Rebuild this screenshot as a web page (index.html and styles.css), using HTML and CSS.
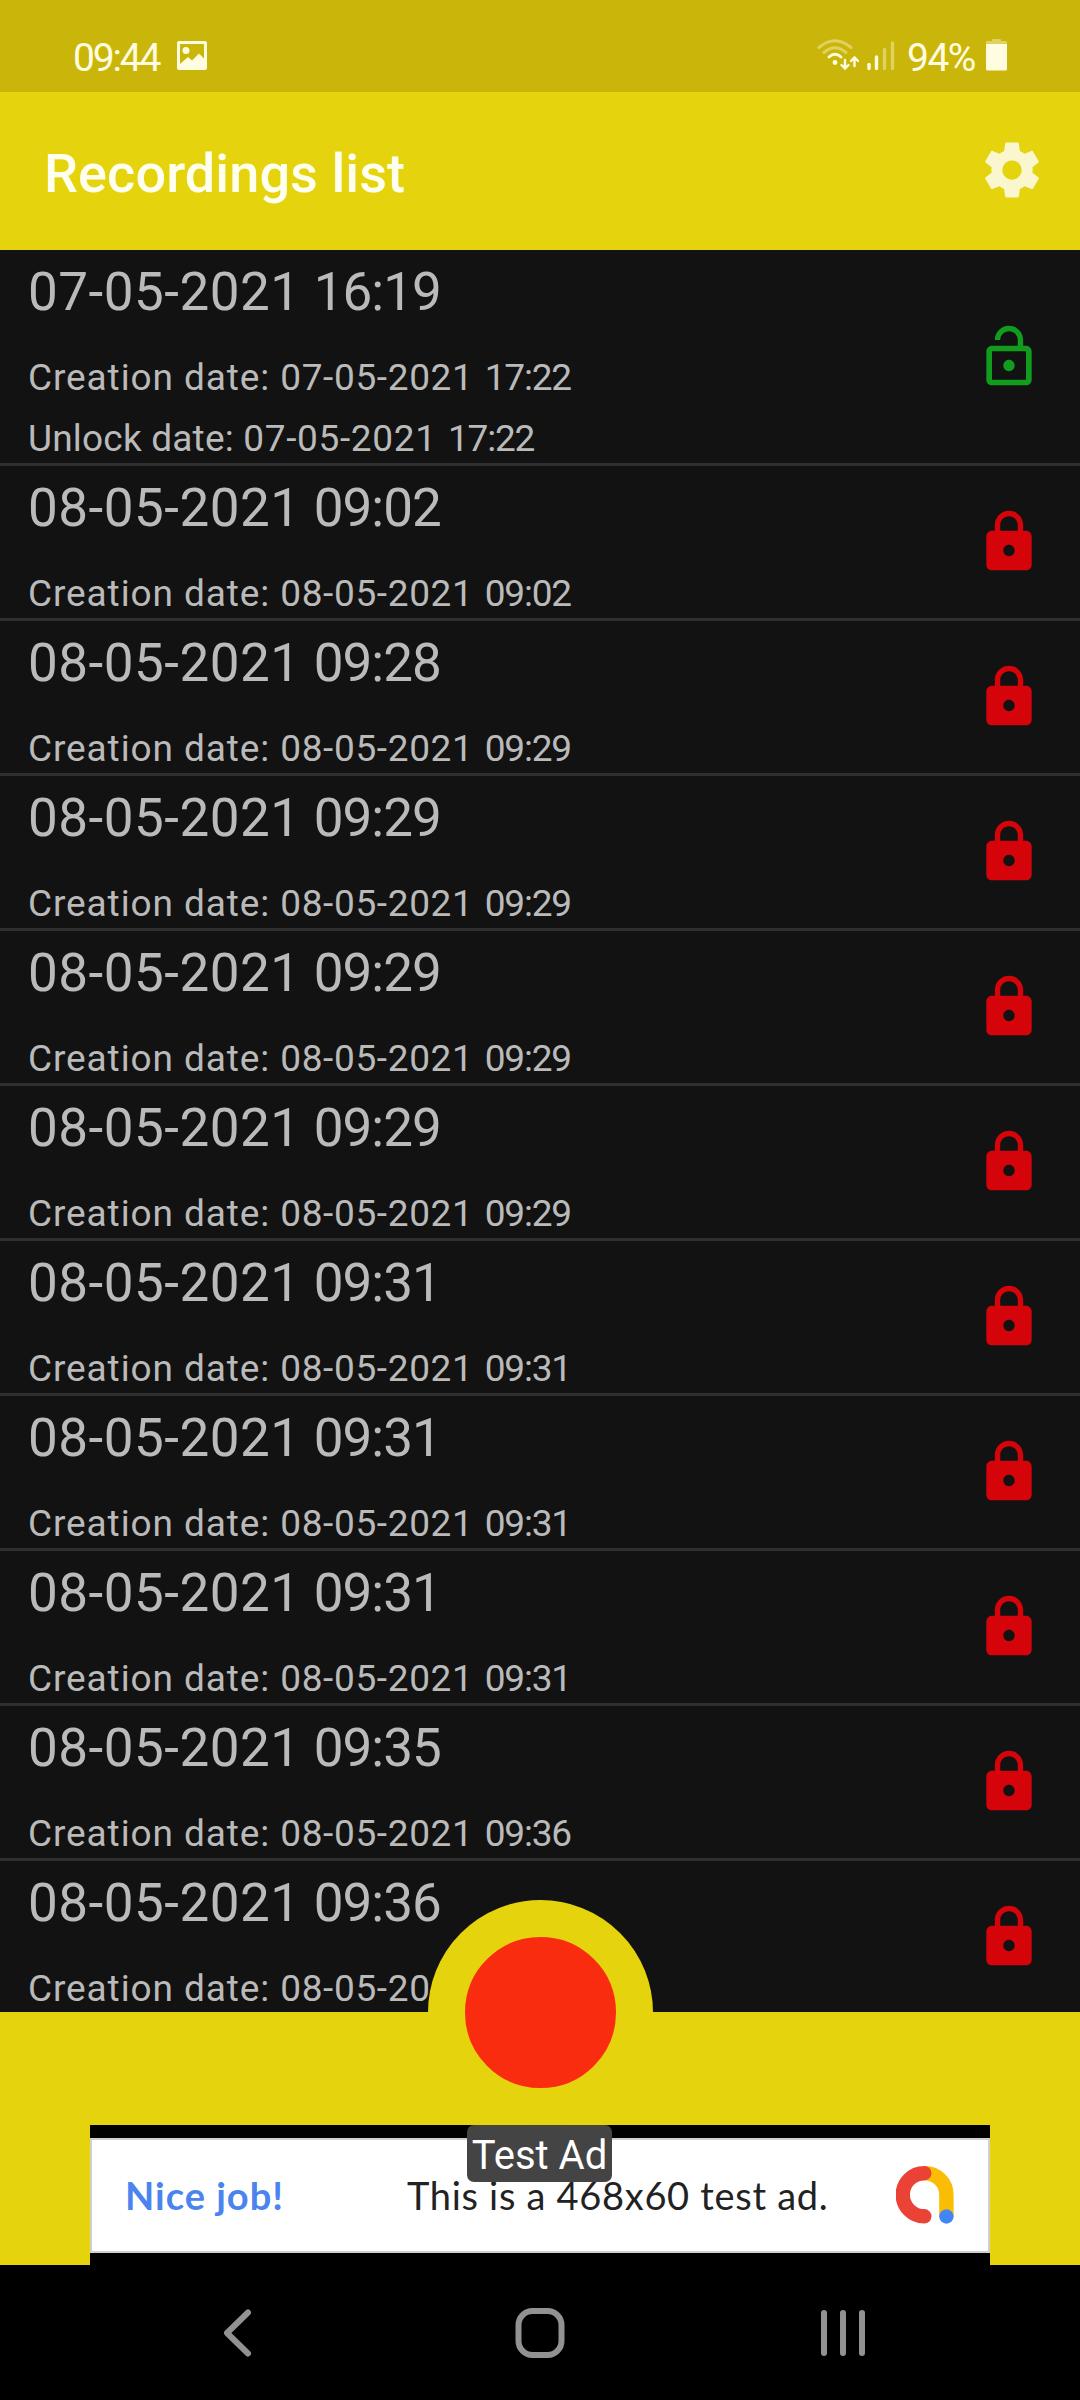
FILE: index.html
```html
<!DOCTYPE html>
<html lang="en">
<head>
<meta charset="utf-8">
<title>Recordings list</title>
<link rel="stylesheet" href="styles.css">
</head>
<body>
<svg class="symbols" aria-hidden="true">
  <symbol id="lock" viewBox="0 0 24 24"><path fill-rule="evenodd" d="M18 8h-1V6c0-2.76-2.24-5-5-5S7 3.240 7 6v2H6c-1.100 0-2 .9-2 2v10c0 1.100.9 2 2 2h12c1.100 0 2-.9 2-2V10c0-1.100-.9-2-2-2zm-6 9c-1.100 0-2-.9-2-2s.9-2 2-2 2 .9 2 2-.9 2-2 2zm3.100-9H8.900V6c0-1.710 1.390-3.100 3.100-3.100s3.100 1.390 3.100 3.100v2z"/></symbol>
  <symbol id="lock-open" viewBox="0 0 24 24"><path fill-rule="evenodd" d="M12 17c1.100 0 2-.9 2-2s-.9-2-2-2-2 .9-2 2 .9 2 2 2zm6-9h-1V6c0-2.760-2.240-5-5-5S7 3.240 7 6h1.900c0-1.710 1.390-3.100 3.100-3.100s3.100 1.390 3.100 3.100v2H6c-1.100 0-2 .9-2 2v10c0 1.100.9 2 2 2h12c1.100 0 2-.9 2-2V10c0-1.100-.9-2-2-2zm0 12H6V10h12v10z"/></symbol>
</svg>
<div class="screen">
  <header class="status">
    <span class="clock">09:44</span>
    <svg class="picture" viewBox="0 0 30 29"><path fill-rule="evenodd" d="M2 0h26a2 2 0 0 1 2 2v25a2 2 0 0 1-2 2H2a2 2 0 0 1-2-2V2A2 2 0 0 1 2 0zM3 3v20l8-7 4 3.500 7-7 5 5V3zM9 6a3.500 3.500 0 1 1 0 7 3.500 3.500 0 0 1 0-7z"/></svg>
    <svg class="wifi" viewBox="0 0 42 32">
      <g fill="none" stroke-width="3" stroke-linecap="round">
        <path class="dim" d="M2 8.500Q18-5 34 8.500M7 13.500Q18 4 29 13.500"/>
        <path d="M12 18Q18 12.500 24 18"/>
        <path d="M28 21v8M24.500 26l3.500 3.500 3.500-3.500M37.500 27v-8M34 22l3.500-3.500L41 22" stroke-width="2.400"/>
      </g>
      <circle cx="18" cy="23.500" r="2.400"/>
    </svg>
    <svg class="signal" viewBox="0 0 28 30"><path d="M2 23.500v4M9.500 16v11.500"/><path class="dim" d="M17.500 8.500v19M25.500 2v25.500"/></svg>
    <span class="percent">94%</span>
    <svg class="battery" viewBox="0 0 21 32"><path class="dim" d="M7 0h7q1 0 1 1v1h5q1 0 1 1v2H0V3q0-1 1-1h5V1q0-1 1-1z"/><path d="M0 5h21v25q0 1.500-1.500 1.500h-18Q0 31.500 0 30z"/></svg>
  </header>
  <div class="appbar">
    <h1>Recordings list</h1>
    <svg class="gear" viewBox="0 0 24 24"><path d="M19.430 12.980c.040-.320.070-.640.070-.980s-.030-.660-.070-.980l2.110-1.650c.190-.150.240-.420.120-.640l-2-3.460c-.120-.220-.390-.300-.610-.220l-2.490 1c-.520-.400-1.080-.730-1.690-.980l-.380-2.650C14.460 2.180 14.250 2 14 2h-4c-.250 0-.460.180-.490.420l-.380 2.650c-.610.250-1.170.590-1.690.980l-2.490-1c-.230-.090-.490 0-.610.220l-2 3.460c-.130.220-.070.490.120.640l2.110 1.650c-.040.320-.070.650-.070.980s.030.660.070.980l-2.110 1.650c-.190.150-.240.420-.120.640l2 3.460c.120.220.390.300.610.220l2.490-1c.520.400 1.080.730 1.690.980l.380 2.650c.030.240.240.420.490.420h4c.250 0 .460-.180.490-.420l.380-2.650c.610-.250 1.170-.590 1.690-.980l2.490 1c.230.090.490 0 .610-.220l2-3.460c.120-.220.070-.490-.120-.640l-2.110-1.650zM12 15.500c-1.930 0-3.500-1.570-3.500-3.500s1.570-3.500 3.500-3.500 3.500 1.570 3.500 3.500-1.570 3.500-3.500 3.500z"/></svg>
  </div>
  <main class="list">
    <article class="row"><div><h2><span class="date">07-05-2021</span> <span class="time">16:19</span></h2><p><span class="label">Creation date: </span><span class="date">07-05-2021</span> <span class="time">17:22</span></p><p class="unlock">Unlock date: <span class="date">07-05-2021</span> <span class="time">17:22</span></p></div><svg class="lock open"><use href="#lock-open"/></svg></article>
    <article class="row"><div><h2><span class="date">08-05-2021</span> <span class="time">09:02</span></h2><p><span class="label">Creation date: </span><span class="date">08-05-2021</span> <span class="time">09:02</span></p></div><svg class="lock"><use href="#lock"/></svg></article>
    <article class="row"><div><h2><span class="date">08-05-2021</span> <span class="time">09:28</span></h2><p><span class="label">Creation date: </span><span class="date">08-05-2021</span> <span class="time">09:29</span></p></div><svg class="lock"><use href="#lock"/></svg></article>
    <article class="row"><div><h2><span class="date">08-05-2021</span> <span class="time">09:29</span></h2><p><span class="label">Creation date: </span><span class="date">08-05-2021</span> <span class="time">09:29</span></p></div><svg class="lock"><use href="#lock"/></svg></article>
    <article class="row"><div><h2><span class="date">08-05-2021</span> <span class="time">09:29</span></h2><p><span class="label">Creation date: </span><span class="date">08-05-2021</span> <span class="time">09:29</span></p></div><svg class="lock"><use href="#lock"/></svg></article>
    <article class="row"><div><h2><span class="date">08-05-2021</span> <span class="time">09:29</span></h2><p><span class="label">Creation date: </span><span class="date">08-05-2021</span> <span class="time">09:29</span></p></div><svg class="lock"><use href="#lock"/></svg></article>
    <article class="row"><div><h2><span class="date">08-05-2021</span> <span class="time">09:31</span></h2><p><span class="label">Creation date: </span><span class="date">08-05-2021</span> <span class="time">09:31</span></p></div><svg class="lock"><use href="#lock"/></svg></article>
    <article class="row"><div><h2><span class="date">08-05-2021</span> <span class="time">09:31</span></h2><p><span class="label">Creation date: </span><span class="date">08-05-2021</span> <span class="time">09:31</span></p></div><svg class="lock"><use href="#lock"/></svg></article>
    <article class="row"><div><h2><span class="date">08-05-2021</span> <span class="time">09:31</span></h2><p><span class="label">Creation date: </span><span class="date">08-05-2021</span> <span class="time">09:31</span></p></div><svg class="lock"><use href="#lock"/></svg></article>
    <article class="row"><div><h2><span class="date">08-05-2021</span> <span class="time">09:35</span></h2><p><span class="label">Creation date: </span><span class="date">08-05-2021</span> <span class="time">09:36</span></p></div><svg class="lock"><use href="#lock"/></svg></article>
    <article class="row"><div><h2><span class="date">08-05-2021</span> <span class="time">09:36</span></h2><p><span class="label">Creation date: </span><span class="date">08-05-20</span></p></div><svg class="lock"><use href="#lock"/></svg></article>
  </main>
  <section class="bottom">
    <div class="record"></div>
    <div class="ad">
      <div class="banner">
        <span class="nice">Nice job!</span>
        <span class="message">This is a 468x60 test ad.</span>
        <svg class="admob" viewBox="0 0 58 58" fill="none" stroke-width="14.400">
          <path stroke="#fbbc04" d="M28.700 7.200A21.500 21.500 0 0 1 50.400 28.700V50.500"/>
          <path stroke="#ea4335" stroke-linecap="round" d="M28.300 7.200A21.500 21.500 0 0 0 28.300 50.300"/>
          <circle cx="50.400" cy="50.500" r="7.200" fill="#4285f4" stroke="none"/>
        </svg>
      </div>
      <span class="badge">Test Ad</span>
    </div>
  </section>
  <nav class="nav">
    <svg width="36" height="50" viewBox="0 0 36 50"><path d="M25 4.500L4 25 25 45.500" stroke-width="6"/></svg>
    <svg width="50" height="50" viewBox="0 0 50 50"><rect x="3.500" y="3" width="43" height="44" rx="14" stroke-width="6"/></svg>
    <svg width="44" height="50" viewBox="0 0 44 50"><path d="M3 5v40M22 5v40M41 5v40" stroke-width="6"/></svg>
  </nav>
</div>
</body>
</html>
```
FILE: styles.css
```css
* { box-sizing: border-box; margin: 0; padding: 0; }
body { background: #000; font-family: Roboto, "Noto Sans", sans-serif; }
svg { display: block; flex: none; }
.symbols { position: absolute; width: 0; height: 0; }
.screen { display: flex; flex-direction: column; width: 1080px; height: 2400px; overflow: hidden; }

.status { display: flex; align-items: flex-start; height: 92px; padding: 39px 73px 0 73px; background: #cab60a; color: #fffce0; fill: #fffce0; stroke: none; white-space: nowrap; }
.status span { font-size: 39px; line-height: 39px; }
.clock { width: 104px; letter-spacing: -2.200px; }
.picture { width: 30px; height: 29px; margin-top: 2px; }
.wifi { width: 42px; height: 32px; margin-left: auto; }
.wifi path { stroke: #fffce0; }
.signal { width: 28px; height: 30px; margin: 2px 0 0 8px; fill: none; stroke: #fffce0; stroke-width: 3.400; stroke-linecap: round; }
.dim { opacity: .4; }
.percent { width: 79px; margin-left: 12px; letter-spacing: -1.500px; }
.battery { width: 21px; height: 32px; }

.appbar { display: flex; align-items: center; justify-content: space-between; height: 158px; padding: 0 35px 2px 44px; background: #e5d30d; }
.appbar h1 { padding-top: 7px; font-size: 54px; font-weight: 500; letter-spacing: .1px; color: #fffff0; }
.gear { width: 66px; height: 66px; fill: #faf6cd; }

.list { height: 1762px; overflow: hidden; background: #121212; color: #bababa; }
.row { display: flex; align-items: center; justify-content: space-between; padding: 0 37px 0 28px; border-bottom: 3px solid #2f2f2f; white-space: nowrap; }
.row h2 { margin-bottom: 20px; font-size: 53px; font-weight: 400; line-height: 84px; }
.row h2 .date { letter-spacing: .5px; }
.row h2 .time { letter-spacing: -1px; }
.row p { font-size: 37px; line-height: 48px; }
.row p .label { letter-spacing: .9px; }
.row p .date { letter-spacing: .65px; }
.row p .time { margin-left: 2px; letter-spacing: -1.200px; }
.row .unlock { margin-top: 13px; letter-spacing: .2px; }
.lock { width: 68px; height: 68px; fill: #d5040b; }
.lock.open { fill: #119c1d; }

.bottom { position: relative; display: flex; flex-direction: column; align-items: center; justify-content: flex-end; height: 253px; background: #e5d30d; }
.record { position: absolute; top: -112px; left: 428px; width: 225px; height: 225px; border: 37.500px solid #e5d30d; border-radius: 50%; background: #fa2c10; }
.ad { position: relative; width: 900px; height: 140px; padding: 13px 0 12px; background: #000; }
.banner { display: flex; align-items: center; height: 115px; padding: 0 34px 2px 33px; border: 2px solid #d0d0d0; background: #fff; font-family: Lato, sans-serif; font-size: 38px; white-space: nowrap; }
.nice { width: 282px; font-weight: 700; letter-spacing: 1px; color: #4c84ee; }
.message { letter-spacing: .7px; color: #222; }
.admob { width: 58px; height: 58px; margin-left: auto; }
.badge { position: absolute; top: 0; left: 377px; width: 145px; height: 57px; border-radius: 7px; background: #444; color: #fff; font-size: 40px; line-height: 61px; text-align: center; }

.nav { display: flex; align-items: center; justify-content: space-between; height: 135px; padding: 0 215px 0 223px; background: #000; fill: none; stroke: #929292; stroke-linecap: round; stroke-linejoin: round; }
```
